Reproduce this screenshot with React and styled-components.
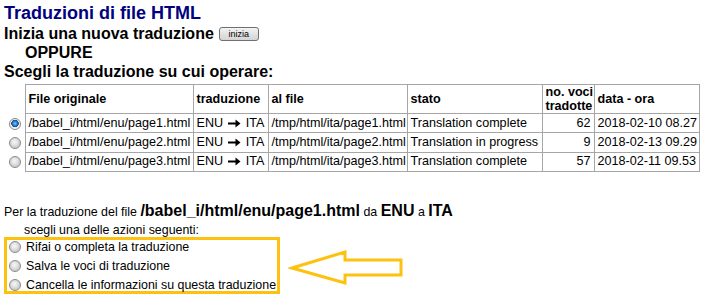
import React from 'react';
import styled, { createGlobalStyle } from 'styled-components';

const GlobalStyle = createGlobalStyle`
  html, body {
    margin: 0;
    padding: 0;
    background: #ffffff;
  }
  body {
    font-family: "Liberation Sans", Arial, sans-serif;
    color: #000000;
  }
`;

const Page = styled.div`
  padding: 3px 4px 0 4px;
`;

const Title = styled.h1`
  margin: 0;
  font-size: 18px;
  line-height: 21px;
  font-weight: bold;
  color: #000080;
`;

const Line = styled.div`
  font-size: 16px;
  font-weight: bold;
  line-height: 19px;
  padding-left: ${(p) => p.indent || 0}px;
  display: flex;
  align-items: center;
`;

const SmallButton = styled.button`
  margin-left: 5px;
  width: 40px;
  height: 14px;
  padding: 0;
  font-family: "Liberation Sans", Arial, sans-serif;
  font-size: 9px;
  line-height: 12px;
  color: #000;
  border: 1px solid #707070;
  border-radius: 3px;
  background: linear-gradient(#f4f4f4, #e2e2e2 50%, #d4d4d4);
`;

const Radio = styled.span`
  display: inline-block;
  box-sizing: border-box;
  width: 12px;
  height: 12px;
  border-radius: 50%;
  border: 1px solid #8a8a8a;
  vertical-align: middle;
  background: ${(p) =>
    p.checked
      ? 'radial-gradient(circle at 50% 45%, #7fd0ff 0, #2b82d9 2px, #16498f 3.5px, #eaeaea 4px, #f7f7f7 5px)'
      : 'radial-gradient(circle at 45% 40%, #f7f7f7 0, #e2e2e2 3px, #cfcfcf 5px)'};
  flex: none;
`;

const Table = styled.table`
  border-collapse: collapse;
  font-size: 12.6px;
  table-layout: fixed;
  width: 695px;
  margin-top: 3px;
`;

const Th = styled.th`
  border: 1px solid #a6a6a6;
  padding: 0 3px;
  height: 28px;
  line-height: 14px;
  text-align: left;
  font-weight: bold;
  vertical-align: middle;
  white-space: nowrap;
`;

const Td = styled.td`
  border: 1px solid #a6a6a6;
  padding: 0 3px;
  height: 18.4px;
  line-height: 15px;
  text-align: ${(p) => (p.right ? 'right' : 'left')};
  white-space: nowrap;
  overflow: hidden;
`;

const PickCell = styled.td`
  border: none;
  padding: 0 0 0 5px;
  line-height: 12px;
`;

const EmptyHead = styled.th`
  border: none;
  padding: 0;
`;

const Lang = styled.span`
  display: flex;
  align-items: center;
  justify-content: space-between;
`;

const Arrow = () => (
  <svg width="13" height="9" viewBox="0 0 13 9">
    <path d="M0 3.5h7.5V0.5L12.5 4.5L7.5 8.5V5.5H0Z" fill="#000" />
  </svg>
);

const Info = styled.div`
  margin-top: 29px;
  font-size: 12.4px;
  line-height: 19px;
`;

const Big = styled.b`
  font-size: 16px;
`;

const InfoSub = styled.div`
  font-size: 12.4px;
  line-height: 16px;
  padding-left: 20px;
`;

const ActionRow = styled.div`
  display: flex;
  align-items: center;
  margin-top: -1px;
`;

const ActionBox = styled.div`
  width: 276px;
  box-sizing: border-box;
  box-shadow: inset 0 0 0 3px #fdc10f;
`;

const Action = styled.div`
  height: 19px;
  display: flex;
  align-items: center;
  padding-left: 5px;
  font-size: 12.4px;
  gap: 5px;
  white-space: nowrap;
`;

const BigArrow = styled.svg`
  margin-left: 8px;
  margin-top: 5px;
  flex: none;
`;

const rows = [
  ['/babel_i/html/enu/page1.html', '/tmp/html/ita/page1.html', 'Translation complete', 62, '2018-02-10 08.27', true],
  ['/babel_i/html/enu/page2.html', '/tmp/html/ita/page2.html', 'Translation in progress', 9, '2018-02-13 09.29', false],
  ['/babel_i/html/enu/page3.html', '/tmp/html/ita/page3.html', 'Translation complete', 57, '2018-02-11 09.53', false],
];

const widths = [21, 168, 75, 139, 135, 52, 105];

export default function App() {
  return (
    <Page>
      <GlobalStyle />
      <Title>Traduzioni di file HTML</Title>
      <Line>
        Inizia una nuova traduzione
        <SmallButton>inizia</SmallButton>
      </Line>
      <Line indent={21}>OPPURE</Line>
      <Line>Scegli la traduzione su cui operare:</Line>

      <Table>
        <colgroup>
          {widths.map((w, i) => (
            <col key={i} style={{ width: w }} />
          ))}
        </colgroup>
        <thead>
          <tr>
            <EmptyHead />
            <Th>File originale</Th>
            <Th>traduzione</Th>
            <Th>al file</Th>
            <Th>stato</Th>
            <Th>
              no. voci
              <br />
              tradotte
            </Th>
            <Th>data - ora</Th>
          </tr>
        </thead>
        <tbody>
          {rows.map((r) => (
            <tr key={r[0]}>
              <PickCell>
                <Radio checked={r[5]} />
              </PickCell>
              <Td>{r[0]}</Td>
              <Td>
                <Lang>
                  <span>ENU</span>
                  <Arrow />
                  <span>ITA</span>
                </Lang>
              </Td>
              <Td>{r[1]}</Td>
              <Td>{r[2]}</Td>
              <Td right>{r[3]}</Td>
              <Td>{r[4]}</Td>
            </tr>
          ))}
        </tbody>
      </Table>

      <Info>
        Per la traduzione del file <Big>/babel_i/html/enu/page1.html</Big> da <Big>ENU</Big> a <Big>ITA</Big>
      </Info>
      <InfoSub>scegli una delle azioni seguenti:</InfoSub>
      <ActionRow>
        <ActionBox>
          <Action>
            <Radio />
            Rifai o completa la traduzione
          </Action>
          <Action>
            <Radio />
            Salva le voci di traduzione
          </Action>
          <Action>
            <Radio />
            Cancella le informazioni su questa traduzione
          </Action>
        </ActionBox>
        <BigArrow width="116" height="36" viewBox="0 0 116 36">
          <path
            d="M4 18L57 2V10H113V25H57V33Z"
            fill="none"
            stroke="#fdc10f"
            strokeWidth="3"
          />
        </BigArrow>
      </ActionRow>
    </Page>
  );
}
